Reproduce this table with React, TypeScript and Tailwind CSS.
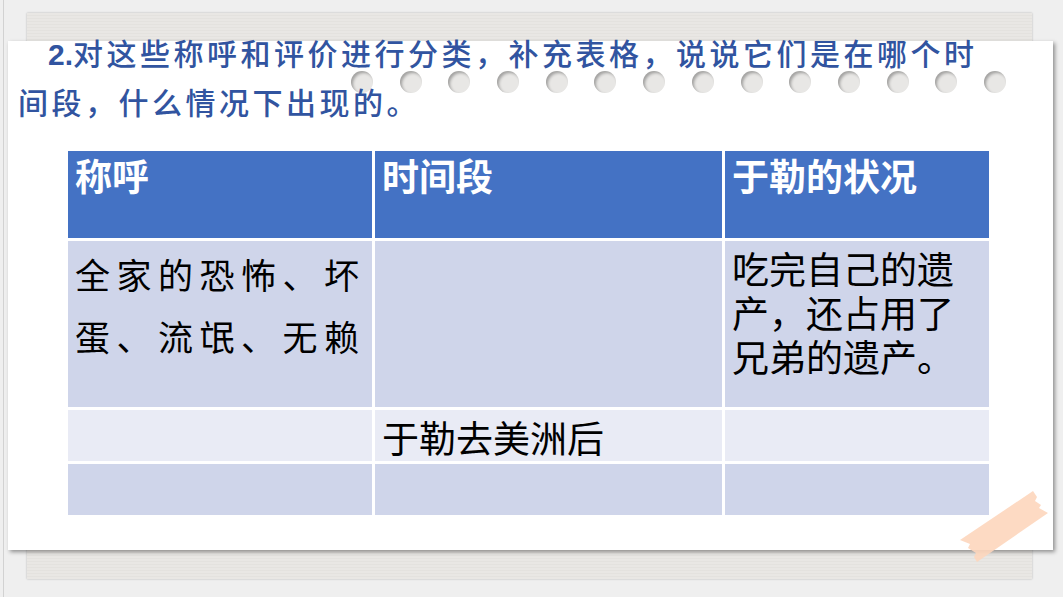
const cjk = "font-['Noto_Sans_CJK_SC','Noto_Sans',sans-serif]"

const holes = Array.from({ length: 14 }, (_, i) => i)

function Tape() {
  return (
    <svg
      className="absolute left-[950px] top-[480px] z-20"
      width="110"
      height="90"
      viewBox="0 0 110 90"
    >
      <polygon
        points="10,60 83,11 87,17 85,21 91,25 89,28 98,33 27,82 24,77 26,73 18,68 20,64"
        fill="#fdd6bc"
        fillOpacity="0.9"
      />
    </svg>
  )
}

export default function App() {
  return (
    <div className={`relative h-[597px] w-[1063px] overflow-hidden bg-[#efefef] ${cjk}`}>
      <div className="absolute inset-y-0 left-[3px] w-px bg-[#d2d2d2]" />

      {/* back paper */}
      <div className="absolute left-[27px] top-[13px] h-[566px] w-[1005px] bg-[repeating-linear-gradient(180deg,#e9e7e4_0px,#e9e7e4_2px,#dfddd9_3px)] shadow-[0_0_2px_rgba(0,0,0,0.25)]" />

      {/* front sheet */}
      <div className="absolute left-[8px] top-[41px] h-[509px] w-[1045px] bg-white shadow-[2px_2px_4px_rgba(0,0,0,0.4)]" />

      {/* punch holes */}
      <div className="absolute left-[351px] top-[71px] flex gap-[26.7px]">
        {holes.map((i) => (
          <div
            key={i}
            className="h-[22px] w-[22px] rounded-full bg-[#e8e7e5] shadow-[inset_2px_2px_3px_rgba(0,0,0,0.3)]"
          />
        ))}
      </div>

      <div className="relative z-10 pt-[28px]">
        <div className="pl-[18px] text-[30px] font-medium tracking-[3.5px] text-[#3154a0]">
          <div className="h-[49px] pl-[30px] leading-[49px]">
            <span className="font-['Liberation_Sans',sans-serif] text-[30px] font-bold tracking-normal">2.</span>
            对这些称呼和评价进行分类，补充表格，说说它们是在哪个时
          </div>
          <div className="h-[49px] leading-[49px]">间段，什么情况下出现的。</div>
        </div>

        <div className="ml-[68px] mt-[25px] grid w-[921px] grid-cols-[304px_347px_264px] grid-rows-[87px_166px_51px_51px] gap-[3px] text-[37px] leading-[44px] text-black">
          <div className="bg-[#4472c4] px-[7px] pt-[2px] font-bold text-white">称呼</div>
          <div className="bg-[#4472c4] px-[7px] pt-[2px] font-bold text-white">时间段</div>
          <div className="bg-[#4472c4] px-[7px] pt-[2px] font-bold text-white">于勒的状况</div>

          <div className="bg-[#cfd5ea] pl-[7px] pt-[2px] text-[35px] leading-[62px] tracking-[6.5px]">
            全家的恐怖、坏蛋、流氓、无赖
          </div>
          <div className="bg-[#cfd5ea]" />
          <div className="bg-[#cfd5ea] px-[7px] pt-[5px]">吃完自己的遗产，还占用了兄弟的遗产。</div>

          <div className="bg-[#e9ebf5]" />
          <div className="bg-[#e9ebf5] px-[7px] pt-[5px]">于勒去美洲后</div>
          <div className="bg-[#e9ebf5]" />

          <div className="bg-[#cfd5ea]" />
          <div className="bg-[#cfd5ea]" />
          <div className="bg-[#cfd5ea]" />
        </div>
      </div>

      <Tape />
    </div>
  )
}
